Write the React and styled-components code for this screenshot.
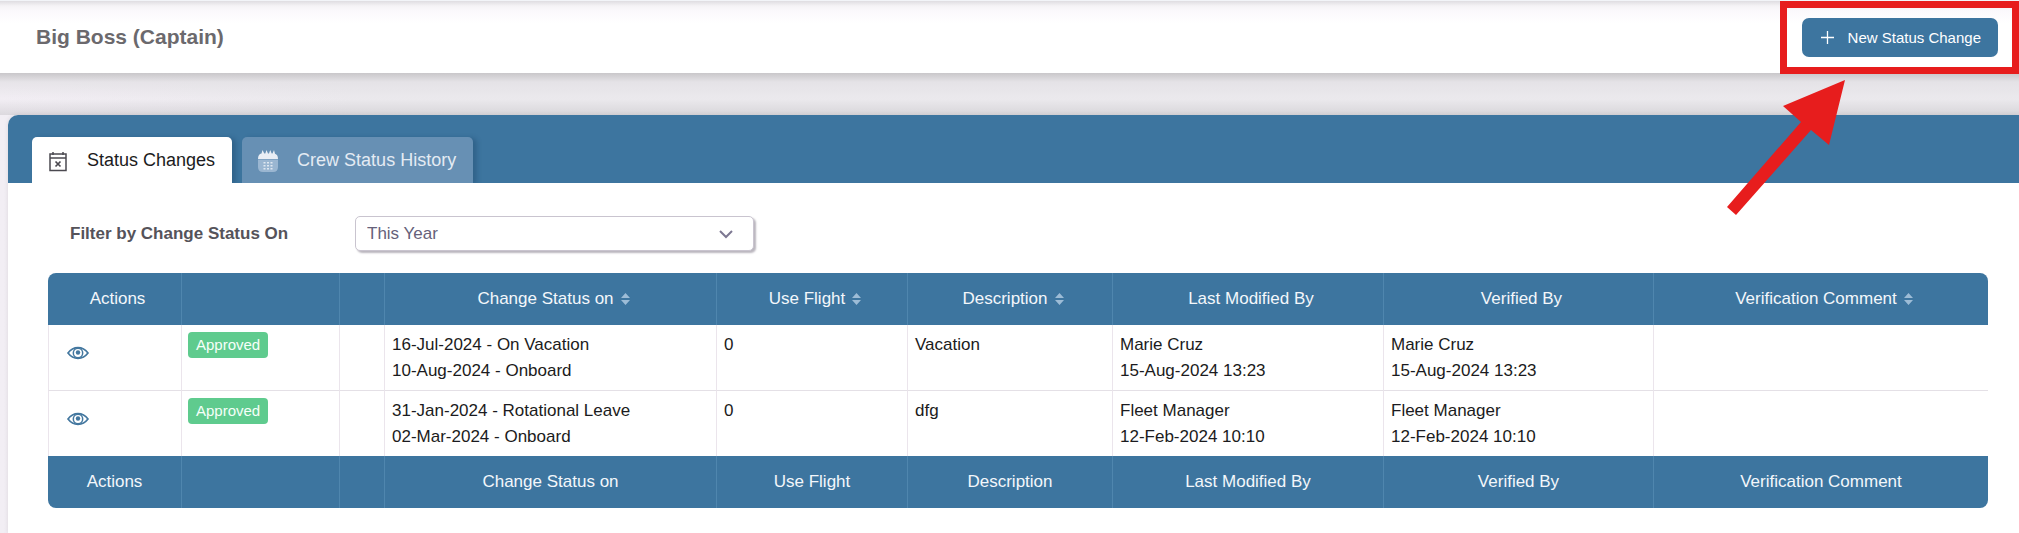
import React, { useState } from "react";
import styled, { createGlobalStyle } from "styled-components";

const BLUE = "#3d759f";
const RED = "#e71d1d";

const GlobalStyle = createGlobalStyle`
  *, *::before, *::after { box-sizing: border-box; }
  body {
    margin: 0;
    background: #edebef;
    color: #1b1b20;
    font-family: "Liberation Sans", Arial, sans-serif;
    font-size: 17px;
  }
  button, select { font: inherit; }
`;

const Page = styled.div`
  position: relative;
  display: flex;
  flex-direction: column;
  min-height: 100vh;
`;

const Header = styled.header`
  display: flex;
  align-items: center;
  justify-content: space-between;
  height: 73px;
  padding: 0 21px 0 36px;
  border-top: 1px solid #f2f4f8;
  background: linear-gradient(#dfdde1, #f5f3f6 5px, #fbf9fc 10px, #fff 22px);
`;

const Title = styled.h1`
  margin: 0;
  color: #6b696d;
  font-size: 21px;
  font-weight: 700;
`;

const Spotlight = styled.div`
  position: relative;

  &::after {
    content: "";
    position: absolute;
    inset: -17px -21px -17px -22px;
    border: 7px solid ${RED};
    pointer-events: none;
  }
`;

const PrimaryButton = styled.button`
  display: flex;
  align-items: center;
  gap: 14px;
  height: 39px;
  padding: 0 17px 0 19px;
  border: 0;
  border-radius: 7px;
  background: ${BLUE};
  color: #fff;
  font-size: 15px;
  cursor: pointer;
`;

const ButtonIcon = styled.svg`
  width: 13px;
  height: 13px;
`;

const Arrow = styled.svg`
  position: absolute;
  top: 80px;
  right: 174px;
  width: 118px;
  height: 136px;
  pointer-events: none;
`;

const Main = styled.main`
  display: flex;
  flex: 1;
  flex-direction: column;
  padding: 42px 0 0 8px;
  background:
    linear-gradient(#c9c7ca, rgba(226, 224, 228, 0.7) 9px, rgba(237, 235, 239, 0) 26px) top / 100% 42px no-repeat,
    linear-gradient(transparent, rgba(180, 178, 182, 0.35)) 0 26px / 100% 16px no-repeat,
    linear-gradient(to right, #f2eef4, #ebe9ed 350px);
`;

const Panel = styled.section`
  display: flex;
  flex: 1;
  flex-direction: column;
  border-radius: 10px 0 0 0;
  background: #fff;
  box-shadow: 0 0 4px rgba(120, 110, 130, 0.18);
`;

const TabBar = styled.div`
  display: flex;
  align-items: flex-end;
  gap: 10px;
  height: 68px;
  padding-left: 24px;
  border-radius: 10px 0 0 0;
  background: ${BLUE};
`;

const Tab = styled.button`
  display: flex;
  align-items: center;
  gap: 19px;
  height: 46px;
  padding: 0 17px 0 16px;
  border: 0;
  border-radius: 5px 5px 0 0;
  background: ${(p) => (p.$active ? "#fff" : "#6790b4")};
  color: ${(p) => (p.$active ? "#1b1b20" : "#e4ebf3")};
  font-size: 18px;
  box-shadow: 4px 1px 5px rgba(20, 55, 90, 0.3);
  clip-path: inset(-6px -10px 0 -6px);
  cursor: pointer;
`;

const TabIcon = styled.svg`
  width: 20px;
  height: 24px;
  margin-top: 3px;
`;

const PanelBody = styled.div`
  padding: 33px 31px 25px 40px;
`;

const FilterRow = styled.div`
  display: grid;
  grid-template-columns: 285px 399px;
  align-items: center;
  margin: 0 0 22px 22px;
`;

const FilterLabel = styled.label`
  color: #55535a;
  font-weight: 700;
`;

const SelectBox = styled.div`
  position: relative;
`;

const Select = styled.select`
  display: block;
  width: 100%;
  height: 35px;
  padding: 0 40px 0 11px;
  appearance: none;
  border: 1px solid #c9c4cf;
  border-radius: 5px;
  background: #fff;
  box-shadow: 2px 2px 2px #bab6be;
  color: #66617a;
`;

const Chevron = styled.svg`
  position: absolute;
  top: 13px;
  right: 20px;
  width: 16px;
  height: 10px;
  pointer-events: none;
`;

const Table = styled.table`
  width: 100%;
  table-layout: fixed;
  border-spacing: 0;
  border-radius: 8px;
  overflow: hidden;
`;

const HeadCell = styled.th`
  height: 52px;
  padding: 0 0 0 ${(p) => (p.$foot ? 0 : 6)}px;
  background: ${BLUE};
  color: #f3f7fb;
  font-weight: 400;
  text-align: center;

  & + & {
    border-left: 1px solid #4f86ae;
  }
`;

const SortButton = styled.button`
  display: inline-flex;
  align-items: center;
  gap: 7px;
  padding: 0;
  border: 0;
  background: none;
  color: inherit;
  cursor: pointer;
`;

const SortIcon = styled.svg`
  width: 9px;
  height: 12px;
`;

const Cell = styled.td`
  padding: 7px 7px 6px;
  border-left: 1px solid #ebe5ec;
  line-height: 26px;
  vertical-align: top;

  tr:first-child > & {
    border-bottom: 1px solid #e4e0e6;
  }
`;

const IconButton = styled.button`
  display: block;
  margin: 9px 0 0 11px;
  padding: 5px 0;
  border: 0;
  background: none;
  cursor: pointer;
`;

const EyeIcon = styled.svg`
  display: block;
  width: 22px;
  height: 14px;
`;

const Badge = styled.span`
  display: block;
  width: fit-content;
  height: 26px;
  margin-left: -1px;
  padding: 0 8px;
  border-radius: 4px;
  background: #5fcb8e;
  color: #f6fff9;
  font-size: 15px;
  line-height: 25px;
`;

const columns = [
  { label: "Actions", width: 133 },
  { label: "", width: 158 },
  { label: "", width: 45 },
  { label: "Change Status on", width: 332, sort: true },
  { label: "Use Flight", width: 191, sort: true },
  { label: "Description", width: 205, sort: true },
  { label: "Last Modified By", width: 271 },
  { label: "Verified By", width: 270 },
  { label: "Verification Comment", width: 335, sort: true },
];
const totalWidth = columns.reduce((sum, c) => sum + c.width, 0);

const rows = [
  {
    change: ["16-Jul-2024 - On Vacation", "10-Aug-2024 - Onboard"],
    flight: "0",
    description: "Vacation",
    by: ["Marie Cruz", "15-Aug-2024 13:23"],
  },
  {
    change: ["31-Jan-2024 - Rotational Leave", "02-Mar-2024 - Onboard"],
    flight: "0",
    description: "dfg",
    by: ["Fleet Manager", "12-Feb-2024 10:10"],
  },
];

const Lines = ({ items }) => items.map((text) => <div key={text}>{text}</div>);

const CalendarX = () => (
  <TabIcon viewBox="0 0 20 24" fill="none" stroke="#4b4950" aria-hidden="true">
    <path d="M2 4h16v16.500H2z" strokeWidth="1.500" />
    <path d="M2 8h16M5 2v3M15 2v3" strokeWidth="1.500" />
    <path d="M7.500 11.500l5 5M12.500 11.500l-5 5" strokeWidth="1.700" />
  </TabIcon>
);

const CalendarSolid = () => (
  <TabIcon viewBox="0 0 20 24" aria-hidden="true">
    <path
      d="M0 9q0-5 3.500-5.500L4.500 0l1.800 3.500h1L8.500 0l1.500 3.500h1L12.200 0l1.500 3.500h.8L16 0l1 3.700Q20 4.500 20 9z"
      fill="#e9eef5"
    />
    <path d="M0 9.500h20V17q0 5-5 5H5q-5 0-5-5z" fill="#9ab6d1" />
    <g fill="#dfe8f1">
      {[12, 15, 18].map((y) => [5.5, 9, 12.5].map((x) => <rect key={`${x}-${y}`} x={x} y={y} width="2" height="1.500" />))}
    </g>
  </TabIcon>
);

const Eye = () => (
  <EyeIcon viewBox="0 0 22 14" fill="none" stroke="#43779f" aria-hidden="true">
    <path d="M1 7q4-5.300 10-5.300T21 7q-4 5.300-10 5.300T1 7z" strokeWidth="1.700" />
    <circle cx="11" cy="7" r="4.700" strokeWidth="1.500" />
    <circle cx="11" cy="6.500" r="2.200" fill="#43779f" stroke="none" />
  </EyeIcon>
);

export default function App() {
  const [tab, setTab] = useState(0);

  return (
    <Page>
      <GlobalStyle />
      <Header>
        <Title>Big Boss (Captain)</Title>
        <Spotlight>
          <PrimaryButton type="button">
            <ButtonIcon viewBox="0 0 13 13" stroke="#fff" strokeWidth="1.300" aria-hidden="true">
              <path d="M6.500 0v13M0 6.500h13" />
            </ButtonIcon>
            New Status Change
          </PrimaryButton>
        </Spotlight>
      </Header>

      <Main>
        <Panel>
          <TabBar role="tablist">
            <Tab type="button" role="tab" aria-selected={tab === 0} $active={tab === 0} onClick={() => setTab(0)}>
              <CalendarX />
              Status Changes
            </Tab>
            <Tab type="button" role="tab" aria-selected={tab === 1} $active={tab === 1} onClick={() => setTab(1)}>
              <CalendarSolid />
              Crew Status History
            </Tab>
          </TabBar>

          <PanelBody>
            <FilterRow>
              <FilterLabel htmlFor="period">Filter by Change Status On</FilterLabel>
              <SelectBox>
                <Select id="period" defaultValue="This Year">
                  <option>This Year</option>
                </Select>
                <Chevron viewBox="0 0 16 10" fill="none" stroke="#7d7892" strokeWidth="2" aria-hidden="true">
                  <path d="M2 2l6 6 6-6" />
                </Chevron>
              </SelectBox>
            </FilterRow>

            <Table>
              <colgroup>
                {columns.map((c, i) => (
                  <col key={i} style={{ width: `${(c.width / totalWidth) * 100}%` }} />
                ))}
              </colgroup>
              <thead>
                <tr>
                  {columns.map((c, i) => (
                    <HeadCell key={i} scope="col">
                      {c.sort ? (
                        <SortButton type="button">
                          {c.label}
                          <SortIcon viewBox="0 0 9 12" fill="#9dbcd6" aria-hidden="true">
                            <path d="M4.500 0L9 5H0zM0 7h9l-4.500 5z" />
                          </SortIcon>
                        </SortButton>
                      ) : (
                        c.label
                      )}
                    </HeadCell>
                  ))}
                </tr>
              </thead>
              <tbody>
                {rows.map((r) => (
                  <tr key={r.change[0]}>
                    <Cell>
                      <IconButton type="button" aria-label="View">
                        <Eye />
                      </IconButton>
                    </Cell>
                    <Cell>
                      <Badge>Approved</Badge>
                    </Cell>
                    <Cell />
                    <Cell>
                      <Lines items={r.change} />
                    </Cell>
                    <Cell>{r.flight}</Cell>
                    <Cell>{r.description}</Cell>
                    <Cell>
                      <Lines items={r.by} />
                    </Cell>
                    <Cell>
                      <Lines items={r.by} />
                    </Cell>
                    <Cell />
                  </tr>
                ))}
              </tbody>
              <tfoot>
                <tr>
                  {columns.map((c, i) => (
                    <HeadCell key={i} $foot>
                      {c.label}
                    </HeadCell>
                  ))}
                </tr>
              </tfoot>
            </Table>
          </PanelBody>
        </Panel>
      </Main>

      <Arrow viewBox="0 0 118 136" fill={RED} aria-hidden="true">
        <path d="M118 0L56 26l18 16L0 127l9 8 75-85 18 15z" />
      </Arrow>
    </Page>
  );
}
